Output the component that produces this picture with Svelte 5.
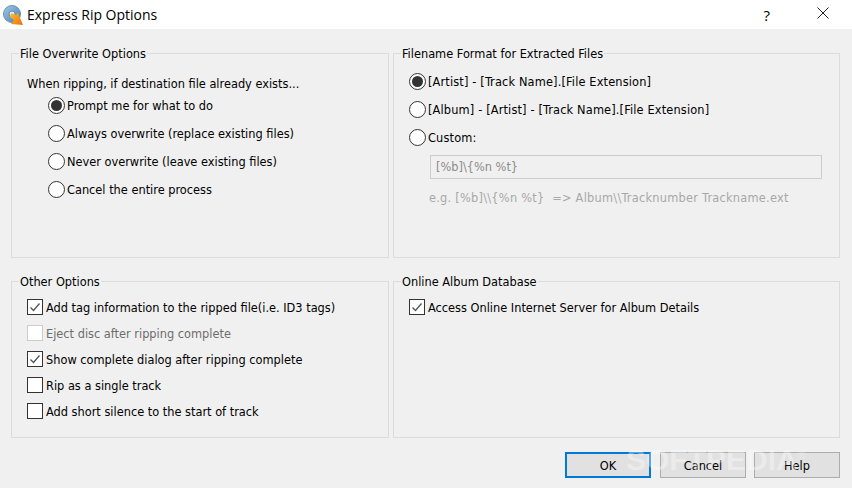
<script>
  const overwrite = [
    { label: "Prompt me for what to do", on: true },
    { label: "Always overwrite (replace existing files)" },
    { label: "Never overwrite (leave existing files)" },
    { label: "Cancel the entire process" }
  ];
  const formats = [
    { label: "[Artist] - [Track Name].[File Extension]", on: true },
    { label: "[Album] - [Artist] - [Track Name].[File Extension]" },
    { label: "Custom:" }
  ];
  const others = [
    { label: "Add tag information to the ripped file(i.e. ID3 tags)", on: true },
    { label: "Eject disc after ripping complete", off: true },
    { label: "Show complete dialog after ripping complete", on: true },
    { label: "Rip as a single track" },
    { label: "Add short silence to the start of track" }
  ];
</script>

{#snippet check(item)}
  <div class="row check-row" class:disabled={item.off}>
    <span class="box">
      {#if item.on}
        <svg width="14" height="14" viewBox="0 0 14 14"><path d="M2.5 7.5 L5.5 10.5 L11.5 3.5" fill="none" stroke="#555" stroke-width="1.3" /></svg>
      {/if}
    </span>
    <span>{item.label}</span>
  </div>
{/snippet}

<div class="dialog">
  <header class="title">
    <svg class="logo" width="22" height="22" viewBox="0 0 22 22">
      <defs>
        <linearGradient id="disc" x1="0" y1="0" x2="1" y2="1">
          <stop offset="0" stop-color="#a9c9e2" />
          <stop offset="1" stop-color="#3f7fb5" />
        </linearGradient>
        <linearGradient id="arr" x1="0" y1="0" x2="1" y2="1">
          <stop offset="0" stop-color="#fbc02d" />
          <stop offset="1" stop-color="#ee6c10" />
        </linearGradient>
      </defs>
      <circle cx="10" cy="10" r="8.5" fill="url(#disc)" stroke="#6b94b5" />
      <circle cx="10" cy="10" r="3" fill="#e6eef5" stroke="#5c8cb0" />
      <path d="M9 9 L14 11 L16 9 L21 21 L9 20 L12 16 L8 13 Z" fill="url(#arr)" />
    </svg>
    <span class="title-text">Express Rip Options</span>
    <span class="help">?</span>
    <svg class="close" width="12" height="12" viewBox="0 0 12 12"><path d="M0.5 0.5 L11.5 11.5 M11.5 0.5 L0.5 11.5" stroke="#222" stroke-width="1" fill="none" /></svg>
  </header>

  <main class="body">
    <div class="groups">
      <fieldset class="group">
        <legend>File Overwrite Options</legend>
        <div class="when">When ripping, if destination file already exists...</div>
        <div class="radios indent">
          {#each overwrite as item}
            <div class="row radio-row">
              <span class="radio" class:on={item.on}></span>
              <span>{item.label}</span>
            </div>
          {/each}
        </div>
      </fieldset>

      <fieldset class="group">
        <legend>Filename Format for Extracted Files</legend>
        <div class="radios first">
          {#each formats as item}
            <div class="row radio-row">
              <span class="radio" class:on={item.on}></span>
              <span>{item.label}</span>
            </div>
          {/each}
        </div>
        <div class="custom">[%b]\{"{"}%n %t}</div>
        <div class="example">e.g. [%b]\\{"{"}%n %t}&nbsp; =&gt; Album\\Tracknumber Trackname.ext</div>
      </fieldset>

      <fieldset class="group short">
        <legend>Other Options</legend>
        <div class="checks">
          {#each others as item}
            {@render check(item)}
          {/each}
        </div>
      </fieldset>

      <fieldset class="group short">
        <legend>Online Album Database</legend>
        <div class="checks">
          {@render check({ label: "Access Online Internet Server for Album Details", on: true })}
        </div>
      </fieldset>
    </div>

    <footer class="buttons">
      <button class="default">OK</button>
      <button>Cancel</button>
      <button>Help</button>
    </footer>
  </main>

  <div class="watermark">SOFTPEDIA<sup>®</sup></div>
</div>

<style>
  :global(body) {
    margin: 0;
    background: #f0f0f0;
  }

  .dialog {
    position: relative;
    width: 852px;
    height: 488px;
    overflow: hidden;
    font-family: "DejaVu Sans Condensed", "DejaVu Sans", Verdana, sans-serif;
    font-stretch: condensed;
    font-size: 12.65px;
    color: #000;
    background: #f0f0f0;
  }

  .title {
    display: flex;
    align-items: center;
    height: 29px;
    background: #fff;
    padding-left: 2px;
    box-sizing: border-box;
  }

  .title-text {
    font-family: "Open Sans", "Noto Sans", sans-serif;
    font-stretch: normal;
    font-size: 14px;
    margin-left: 3px;
    flex: 1;
  }

  .help {
    font-family: "Open Sans", sans-serif;
    font-stretch: normal;
    font-size: 15px;
    margin-right: 47px;
  }

  .close {
    margin: -3px 23px 0 0;
  }

  .body {
    padding: 24px 12px 0 11px;
  }

  .groups {
    display: grid;
    grid-template-columns: 378px 447px;
    grid-template-rows: 205px 157px;
    column-gap: 4px;
    row-gap: 23px;
  }

  .group {
    margin: -8px 0 0;
    padding: 0;
    min-width: 0;
    border: 1px solid #dcdcdc;
    box-sizing: border-box;
    height: 213px;
  }

  .group.short {
    height: 165px;
  }

  legend {
    margin-left: 7px;
    padding: 2px 1px 0;
    line-height: 14px;
  }

  .when {
    margin: 15px 0 0 15px;
    line-height: 16px;
  }

  .radios {
    display: flex;
    flex-direction: column;
  }

  .radios.indent {
    margin: -1px 0 0 36px;
  }

  .radios.first {
    margin: 6px 0 0 15px;
    letter-spacing: 0.15px;
  }

  .row {
    display: flex;
    align-items: center;
  }

  .radio-row {
    height: 28px;
    gap: 2px;
  }

  .radio {
    width: 15px;
    height: 15px;
    border: 1px solid #333;
    border-radius: 50%;
    background: #fff;
    position: relative;
    flex: none;
  }

  .radio.on::after {
    content: "";
    position: absolute;
    left: 2px;
    top: 2px;
    width: 11px;
    height: 11px;
    border-radius: 50%;
    background: #333;
  }

  .custom {
    margin: 4px 0 0 36px;
    width: 392px;
    height: 24px;
    line-height: 22px;
    box-sizing: border-box;
    border: 1px solid #ccc;
    padding-left: 5px;
    color: #8c8c8c;
  }

  .example {
    margin: 11px 0 0 35px;
    color: #a8a8a8;
    line-height: 16px;
    letter-spacing: 0.25px;
  }

  .checks {
    display: flex;
    flex-direction: column;
    margin: 5px 0 0 15px;
  }

  .check-row {
    height: 26px;
    gap: 3px;
  }

  .box {
    width: 14px;
    height: 14px;
    border: 1px solid #333;
    background: #fff;
    flex: none;
    display: flex;
  }

  .disabled {
    color: #6d6d6d;
  }

  .disabled .box {
    border-color: #ccc;
  }

  .buttons {
    display: flex;
    gap: 9px;
    justify-content: flex-end;
    margin-top: 14px;
  }

  button {
    width: 86px;
    height: 26px;
    padding: 0;
    font: inherit;
    color: #000;
    background: #e1e1e1;
    border: 1px solid #adadad;
    border-radius: 0;
  }

  button:last-child {
    margin-left: -1px;
  }

  button.default {
    border: 2px solid #0078d7;
  }

  .watermark {
    position: absolute;
    left: 626px;
    top: 437px;
    font-family: "Liberation Sans", sans-serif;
    font-stretch: normal;
    font-weight: 700;
    font-size: 30px;
    color: rgba(255, 255, 255, 0.35);
    line-height: 36px;
    pointer-events: none;
  }

  .watermark sup {
    font-size: 11px;
    font-weight: 400;
  }
</style>
